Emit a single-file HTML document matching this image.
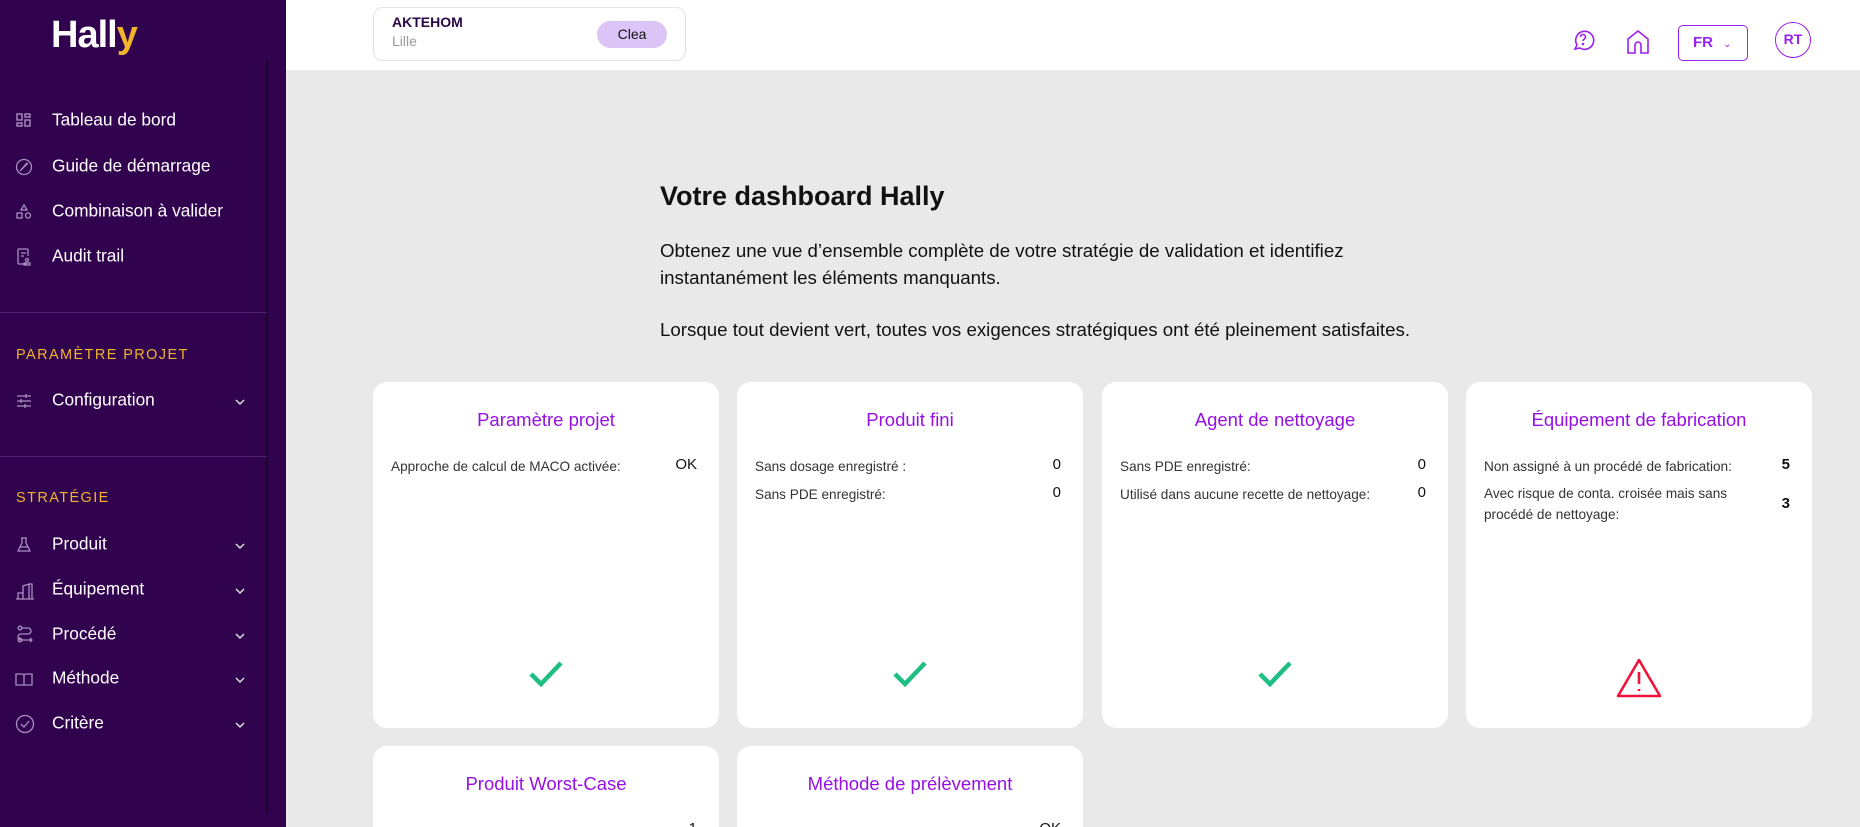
<!DOCTYPE html>
<html style="height:827px;overflow:hidden"><head><meta charset="utf-8">
<style>
*{box-sizing:border-box;margin:0;padding:0}
body{width:1860px;height:827px;overflow:hidden;background:#e9e9e9;font-family:"Liberation Sans",sans-serif;position:relative}
.side{position:absolute;left:0;top:0;width:286px;height:827px;background:#31034f}
.vline{position:absolute;left:266px;top:60px;width:2px;height:753px;background:#1a0229}
.logo{position:absolute;left:51px;top:14px;color:#fff;font-weight:bold;font-size:38px;letter-spacing:-1px}
.nav{position:absolute;left:52px;color:#fff;font-size:17.3px;transform:translateY(-50%)}
.ic{position:absolute;left:15px;transform:translateY(-50%)}
.chev{position:absolute;left:234px;transform:translateY(-50%)}
.sec{position:absolute;left:16px;color:#f2b42a;font-size:14.5px;letter-spacing:1.4px;transform:translateY(-50%)}
.div{position:absolute;left:0;width:267px;height:1px;background:#4b2170}
.head{position:absolute;left:286px;top:0;right:0;height:70px;background:#fff}
.proj{position:absolute;left:373px;top:7px;width:313px;height:54px;border:1px solid #e3e3e3;border-radius:10px;background:#fff}
.card{position:absolute;width:346px;height:346px;background:#fff;border-radius:14px}
.card.s{height:81px;border-radius:14px 14px 0 0}
.ct{position:absolute;left:0;right:0;top:27px;text-align:center;color:#9610e6;font-size:18.5px}
.row{position:absolute;left:18px;right:22px;font-size:13.6px;color:#333;line-height:24px}
.row b{position:absolute;right:0;top:-2px;font-weight:normal;color:#111;font-size:15px}
</style></head><body>
<div class="side">
 <div class="logo">Hall<span style="color:#f2b42a">y</span></div>
 <div class="vline"></div>
 <svg class="ic" style="top:121px" width="18" height="18" viewBox="0 0 18 18" fill="none" stroke="#a88fc0" stroke-width="1.4"><rect x="2" y="2" width="5" height="6"/><rect x="10" y="2" width="5" height="3"/><rect x="2" y="11" width="5" height="3"/><rect x="10" y="8" width="5" height="6"/></svg>
 <div class="nav" style="top:120px">Tableau de bord</div>
 <svg class="ic" style="top:167px" width="18" height="18" viewBox="0 0 18 18" fill="none" stroke="#a88fc0" stroke-width="1.3"><circle cx="9" cy="9" r="7.5"/><path d="M5 13L12 5M6 12l7-7"/></svg>
 <div class="nav" style="top:166px">Guide de démarrage</div>
 <svg class="ic" style="top:212px" width="18" height="18" viewBox="0 0 18 18" fill="none" stroke="#a88fc0" stroke-width="1.3"><path d="M9 2l3 5H6z"/><rect x="2" y="10" width="5" height="5"/><circle cx="13" cy="12.5" r="2.5"/></svg>
 <div class="nav" style="top:211px">Combinaison à valider</div>
 <svg class="ic" style="top:257px" width="18" height="20" viewBox="0 0 18 20" fill="none" stroke="#a88fc0" stroke-width="1.3"><path d="M12 17H4a1 1 0 01-1-1V3a1 1 0 011-1h8a1 1 0 011 1v6M6 6h5M6 9h3"/><circle cx="12" cy="13" r="1.5"/><path d="M9 18h6v-2H9z"/></svg>
 <div class="nav" style="top:256px">Audit trail</div>
 <div class="div" style="top:312px"></div>
 <div class="sec" style="top:355px">PARAMÈTRE PROJET</div>
 <svg class="ic" style="top:401px" width="18" height="16" viewBox="0 0 18 16" fill="none" stroke="#a88fc0" stroke-width="1.3"><path d="M2 3h14M2 8h14M2 13h14M11 1v4M6 6v4M10 11v4"/></svg>
 <div class="nav" style="top:400px">Configuration</div>
 <div class="div" style="top:456px"></div>
 <div class="sec" style="top:498px">STRATÉGIE</div>
 <svg class="ic" style="top:545px" width="18" height="18" viewBox="0 0 18 18" fill="none" stroke="#a88fc0" stroke-width="1.3"><path d="M6 2h6M7 2v5L3 15h12L11 7V2M5 11h8"/></svg>
 <div class="nav" style="top:544px">Produit</div>
 <svg class="ic" style="top:590px" width="20" height="20" viewBox="0 0 20 20" fill="none" stroke="#a88fc0" stroke-width="1.3"><path d="M1 19h18M3 19v-6h5v6M8 19V6l6-2v15M14 4h3v15"/></svg>
 <div class="nav" style="top:589px">Équipement</div>
 <svg class="ic" style="top:635px" width="20" height="20" viewBox="0 0 20 20" fill="none" stroke="#a88fc0" stroke-width="1.3"><circle cx="5" cy="3" r="1.8"/><path d="M7 3h6a3 3 0 010 6H6a3 3 0 000 6h11"/><circle cx="5" cy="15" r="1.8"/><path d="M15 13l2 2-2 2"/></svg>
 <div class="nav" style="top:634px">Procédé</div>
 <svg class="ic" style="top:679px" width="18" height="16" viewBox="0 0 18 16" fill="none" stroke="#a88fc0" stroke-width="1.3"><path d="M1 3h6a2 2 0 012 2v9H1zM17 3h-6a2 2 0 00-2 2v9h8z"/></svg>
 <div class="nav" style="top:678px">Méthode</div>
 <svg class="ic" style="top:724px" width="20" height="20" viewBox="0 0 20 20" fill="none" stroke="#a88fc0" stroke-width="1.3"><circle cx="10" cy="10" r="8.5"/><path d="M6 10l3 3 5-6"/></svg>
 <div class="nav" style="top:723px">Critère</div>
 <svg class="chev" style="top:402px" width="12" height="8" viewBox="0 0 12 8" fill="none" stroke="#ddd" stroke-width="1.5"><path d="M2 2l4 4 4-4"/></svg>
 <svg class="chev" style="top:546px" width="12" height="8" viewBox="0 0 12 8" fill="none" stroke="#ddd" stroke-width="1.5"><path d="M2 2l4 4 4-4"/></svg>
 <svg class="chev" style="top:591px" width="12" height="8" viewBox="0 0 12 8" fill="none" stroke="#ddd" stroke-width="1.5"><path d="M2 2l4 4 4-4"/></svg>
 <svg class="chev" style="top:636px" width="12" height="8" viewBox="0 0 12 8" fill="none" stroke="#ddd" stroke-width="1.5"><path d="M2 2l4 4 4-4"/></svg>
 <svg class="chev" style="top:680px" width="12" height="8" viewBox="0 0 12 8" fill="none" stroke="#ddd" stroke-width="1.5"><path d="M2 2l4 4 4-4"/></svg>
 <svg class="chev" style="top:725px" width="12" height="8" viewBox="0 0 12 8" fill="none" stroke="#ddd" stroke-width="1.5"><path d="M2 2l4 4 4-4"/></svg>
</div>
<div class="head"></div>
<div class="proj">
 <div style="position:absolute;left:18px;top:6px;font-weight:bold;font-size:14px;color:#2a0845">AKTEHOM</div>
 <div style="position:absolute;left:18px;top:25px;font-size:14px;color:#999">Lille</div>
 <div style="position:absolute;left:223px;top:13px;width:70px;height:27px;border-radius:14px;background:#dcc4f6;text-align:center;line-height:27px;font-size:14px;color:#111">Clea</div>
</div>
<svg style="position:absolute;left:1571px;top:28px" width="24" height="24" viewBox="0 0 24 24" fill="none" stroke="#9b1ff0" stroke-width="1.6"><path d="M4 21l2-4a9 9 0 113 3z"/><path d="M9.5 9a2.5 2.5 0 115 0c0 2-2.5 2-2.5 4"/><circle cx="12" cy="16" r=".5" fill="#9b1ff0"/></svg>
<svg style="position:absolute;left:1626px;top:29px" width="24" height="26" viewBox="0 0 24 26" fill="none" stroke="#9b1ff0" stroke-width="1.6"><path d="M2 10l10-8 10 8v14h-7v-8a3 3 0 00-6 0v8H2z"/></svg>
<div style="position:absolute;left:1678px;top:25px;width:70px;height:36px;border:1.5px solid #9b1ff0;border-radius:5px;color:#9b1ff0;font-size:15px;font-weight:bold;line-height:33px;padding-left:14px">FR <span style="font-size:10px;margin-left:6px;font-weight:normal">&#8964;</span></div>
<div style="position:absolute;left:1775px;top:22px;width:36px;height:36px;border:1.5px solid #9b1ff0;border-radius:50%;color:#9b1ff0;font-size:14px;font-weight:bold;text-align:center;line-height:32px">RT</div>

<div style="position:absolute;left:660px;top:181px;font-size:27px;font-weight:bold;color:#111">Votre dashboard Hally</div>
<div style="position:absolute;left:660px;top:237px;font-size:18.7px;color:#111;line-height:27px">Obtenez une vue d’ensemble complète de votre stratégie de validation et identifiez<br>instantanément les éléments manquants.</div>
<div style="position:absolute;left:660px;top:316px;font-size:18.7px;color:#111;line-height:27px">Lorsque tout devient vert, toutes vos exigences stratégiques ont été pleinement satisfaites.</div>

<div class="card" style="left:373px;top:382px">
 <div class="ct">Paramètre projet</div>
 <div class="row" style="top:73px">Approche de calcul de MACO activée:<b>OK</b></div>
 <svg style="position:absolute;left:155px;top:278px" width="36" height="28" viewBox="0 0 36 28" fill="none" stroke="#1dbf82" stroke-width="4.5"><path d="M3 14l10 10L33 3"/></svg>
</div>
<div class="card" style="left:737px;top:382px">
 <div class="ct">Produit fini</div>
 <div class="row" style="top:73px">Sans dosage enregistré :<b>0</b></div>
 <div class="row" style="top:101px">Sans PDE enregistré:<b>0</b></div>
 <svg style="position:absolute;left:155px;top:278px" width="36" height="28" viewBox="0 0 36 28" fill="none" stroke="#1dbf82" stroke-width="4.5"><path d="M3 14l10 10L33 3"/></svg>
</div>
<div class="card" style="left:1102px;top:382px">
 <div class="ct">Agent de nettoyage</div>
 <div class="row" style="top:73px">Sans PDE enregistré:<b>0</b></div>
 <div class="row" style="top:101px">Utilisé dans aucune recette de nettoyage:<b>0</b></div>
 <svg style="position:absolute;left:155px;top:278px" width="36" height="28" viewBox="0 0 36 28" fill="none" stroke="#1dbf82" stroke-width="4.5"><path d="M3 14l10 10L33 3"/></svg>
</div>
<div class="card" style="left:1466px;top:382px">
 <div class="ct">Équipement de fabrication</div>
 <div class="row" style="top:73px">Non assigné à un procédé de fabrication:<b style="font-weight:bold">5</b></div>
 <div class="row" style="top:101px;line-height:21px;padding-right:40px">Avec risque de conta. croisée mais sans procédé de nettoyage:<b style="font-weight:bold;top:10px">3</b></div>
 <svg style="position:absolute;left:150px;top:275px" width="46" height="42" viewBox="0 0 46 42" fill="none" stroke="#f0143c" stroke-width="2.6" stroke-linejoin="round"><path d="M23 3L2 39h42z"/><path d="M23 15v12M23 32v2"/></svg>
</div>
<div class="card s" style="left:373px;top:746px">
 <div class="ct">Produit Worst-Case</div>
 <div class="row" style="top:73px"><b>1</b></div>
</div>
<div class="card s" style="left:737px;top:746px">
 <div class="ct">Méthode de prélèvement</div>
 <div class="row" style="top:73px"><b>OK</b></div>
</div>
</body></html>
